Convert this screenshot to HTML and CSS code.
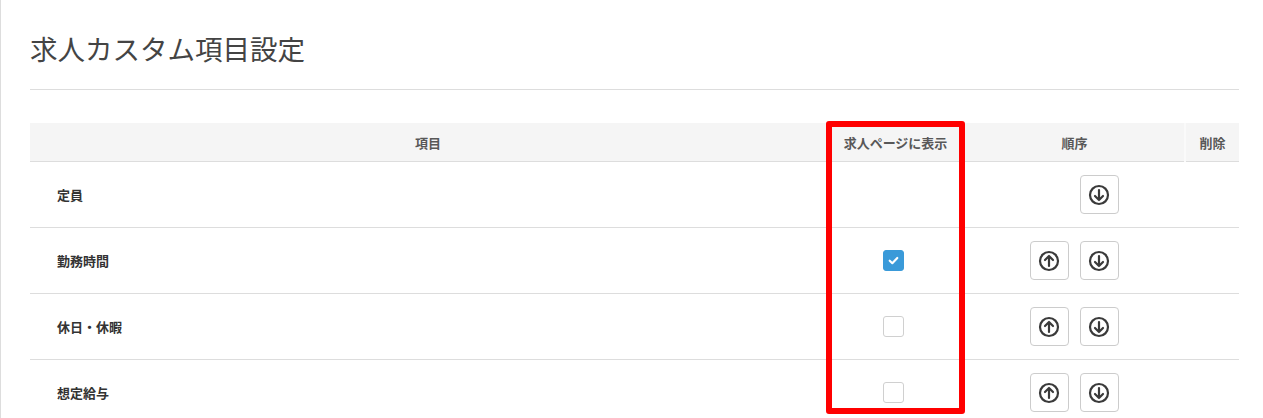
FILE: index.html
```html
<!DOCTYPE html>
<html lang="ja">
<head>
<meta charset="utf-8">
<title>求人カスタム項目設定</title>
<link rel="stylesheet" href="styles.css">
</head>
<body>
<div class="page">
  <h1 class="title">求人カスタム項目設定</h1>
  <hr class="rule">
  <div class="table-wrap">
    <table class="items">
      <colgroup>
        <col class="c-name"><col class="c-show"><col class="c-order"><col class="c-del">
      </colgroup>
      <thead>
        <tr>
          <th>項目</th>
          <th>求人ページに表示</th>
          <th>順序</th>
          <th class="th-del">削除</th>
        </tr>
      </thead>
      <tbody>
        <tr>
          <td class="name">定員</td>
          <td class="center"></td>
          <td class="center">
            <div class="btns">
              <button class="btn hidden"><svg viewBox="0 0 24 24" class="ico"><circle cx="12" cy="12" r="9"/><path d="M12 17V7M8 11l4-4 4 4"/></svg></button>
              <button class="btn"><svg viewBox="0 0 24 24" class="ico"><circle cx="12" cy="12" r="9"/><path d="M12 7v10M8 13l4 4 4-4"/></svg></button>
            </div>
          </td>
          <td></td>
        </tr>
        <tr>
          <td class="name">勤務時間</td>
          <td class="center"><span class="chk on"><svg viewBox="0 0 12 12" class="tick"><path d="M2.5 6.2l2.4 2.3 4.6-4.8"/></svg></span></td>
          <td class="center">
            <div class="btns">
              <button class="btn"><svg viewBox="0 0 24 24" class="ico"><circle cx="12" cy="12" r="9"/><path d="M12 17V7M8 11l4-4 4 4"/></svg></button>
              <button class="btn"><svg viewBox="0 0 24 24" class="ico"><circle cx="12" cy="12" r="9"/><path d="M12 7v10M8 13l4 4 4-4"/></svg></button>
            </div>
          </td>
          <td></td>
        </tr>
        <tr>
          <td class="name">休日・休暇</td>
          <td class="center"><span class="chk"></span></td>
          <td class="center">
            <div class="btns">
              <button class="btn"><svg viewBox="0 0 24 24" class="ico"><circle cx="12" cy="12" r="9"/><path d="M12 17V7M8 11l4-4 4 4"/></svg></button>
              <button class="btn"><svg viewBox="0 0 24 24" class="ico"><circle cx="12" cy="12" r="9"/><path d="M12 7v10M8 13l4 4 4-4"/></svg></button>
            </div>
          </td>
          <td></td>
        </tr>
        <tr>
          <td class="name">想定給与</td>
          <td class="center"><span class="chk"></span></td>
          <td class="center">
            <div class="btns">
              <button class="btn"><svg viewBox="0 0 24 24" class="ico"><circle cx="12" cy="12" r="9"/><path d="M12 17V7M8 11l4-4 4 4"/></svg></button>
              <button class="btn"><svg viewBox="0 0 24 24" class="ico"><circle cx="12" cy="12" r="9"/><path d="M12 7v10M8 13l4 4 4-4"/></svg></button>
            </div>
          </td>
          <td></td>
        </tr>
      </tbody>
    </table>
    <div class="highlight"></div>
  </div>
</div>
</body>
</html>
```
FILE: styles.css
```css
html, body {
  margin: 0;
  padding: 0;
  background: #fff;
  font-family: "Noto Sans CJK JP", "Noto Sans", sans-serif;
  color: #333;
}
.page {
  border-left: 1px solid #ddd;
  padding: 30px 24px 0 29px;
  min-height: 418px;
  box-sizing: border-box;
}
.title {
  margin: 0;
  font-size: 27.5px;
  line-height: 36px;
  font-weight: normal;
  color: #444;
}
.rule {
  margin: 23px 0 0 0;
  border: 0;
  border-top: 1px solid #ddd;
  width: 1209px;
}
.table-wrap {
  position: relative;
  margin-top: 33px;
  width: 1209px;
}
.items {
  width: 1209px;
  border-collapse: collapse;
  table-layout: fixed;
}
.c-name { width: 796px; }
.c-show { width: 139px; }
.c-order { width: 220px; }
.c-del { width: 54px; }
.items th {
  background: #f5f5f5;
  height: 38px;
  padding: 0;
  font-size: 13px;
  font-weight: bold;
  color: #585858;
  text-align: center;
  border-bottom: 1px solid #ddd;
}
.items th.th-del {
  border-left: 2px solid #fafafa;
}
.items td {
  height: 65px;
  padding: 0;
  border-bottom: 1px solid #ddd;
  font-size: 13px;
  font-weight: bold;
  color: #333;
}
.items td.name {
  padding-left: 27px;
}
.items td.center {
  text-align: center;
}
.btns {
  display: flex;
  justify-content: center;
  gap: 11px;
  padding-right: 2px;
}
.btn {
  width: 39px;
  height: 39px;
  padding: 0;
  border: 1px solid #ccc;
  border-radius: 4px;
  background: #fff;
  display: flex;
  align-items: center;
  justify-content: center;
}
.btn.hidden {
  visibility: hidden;
}
.ico {
  width: 24px;
  height: 24px;
  fill: none;
  stroke: #3a3a3a;
  stroke-width: 2.2;
  stroke-linecap: round;
  stroke-linejoin: round;
}
.chk {
  display: inline-block;
  width: 21px;
  height: 21px;
  box-sizing: border-box;
  border: 1px solid #d0d0d0;
  border-radius: 3px;
  background: #fff;
  vertical-align: middle;
  margin-right: 5px;
}
.chk.on {
  background: #3a9ad9;
  border-color: #3a9ad9;
}
.tick {
  display: block;
  width: 13px;
  height: 13px;
  margin: 3px auto 0;
  fill: none;
  stroke: #fff;
  stroke-width: 2;
  stroke-linecap: round;
  stroke-linejoin: round;
}
.highlight {
  position: absolute;
  left: 796px;
  top: -2px;
  width: 139px;
  height: 293px;
  box-sizing: border-box;
  border: 6px solid #ff0000;
  border-radius: 3px;
  pointer-events: none;
}
```
